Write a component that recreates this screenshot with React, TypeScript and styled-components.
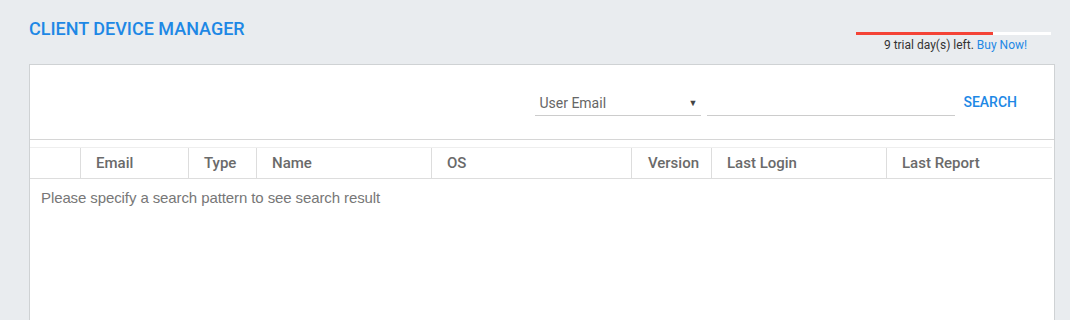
import React from 'react'
import styled, { createGlobalStyle } from 'styled-components'

const GlobalStyle = createGlobalStyle`
  body {
    margin: 0;
    background: #e9ecef;
    font-family: Roboto, "Liberation Sans", Arial, sans-serif;
  }
`

const Page = styled.div`
  padding: 0 15px 0 29px;
  height: 320px;
  overflow: hidden;
`

const Header = styled.div`
  display: flex;
  justify-content: space-between;
  align-items: flex-start;
  height: 64px;
`

const Title = styled.h1`
  margin: 18px 0 0;
  font-size: 18px;
  line-height: 22px;
  font-weight: 500;
  color: #1e88e5;
`

const Trial = styled.div`
  width: 195px;
  margin: 32px 4px 0 0;
  display: flex;
  flex-direction: column;
  align-items: center;
`

const Bar = styled.div`
  width: 100%;
  height: 3px;
  background: #fff;
`

const BarFill = styled.div`
  height: 100%;
  background: #f44336;
`

const TrialText = styled.div`
  margin: 3px 0 0 4px;
  font-size: 12px;
  line-height: 14px;
  color: #333;

  a {
    color: #1e88e5;
    text-decoration: none;
  }
`

const Panel = styled.div`
  background: #fff;
  border: 1px solid #cfd2d4;
  border-bottom: none;
  height: 260px;
`

const Toolbar = styled.div`
  display: flex;
  justify-content: flex-end;
  align-items: center;
  height: 74px;
  padding-right: 37px;
  border-bottom: 1px solid #d6d6d6;
`

const Select = styled.div`
  display: flex;
  justify-content: space-between;
  align-items: center;
  box-sizing: border-box;
  width: 166px;
  height: 28px;
  padding: 2px 4px 0;
  border-bottom: 1px solid #ccc;
  font-size: 14px;
  color: #666;

  span:last-child {
    font-size: 9px;
    color: #444;
  }
`

const Input = styled.div`
  box-sizing: border-box;
  width: 248px;
  height: 28px;
  margin-left: 6px;
  border-bottom: 1px solid #ccc;
`

const SearchButton = styled.button`
  border: none;
  background: none;
  margin-left: 8px;
  padding: 0;
  font-family: Roboto, sans-serif;
  font-size: 14px;
  font-weight: 500;
  color: #1e88e5;
  cursor: pointer;
`

const Table = styled.div`
  margin: 7px 2px 0 0;
`

const HeadRow = styled.div`
  display: grid;
  grid-template-columns: 50px 108px 68px 175px 200px 80px 175px 1fr;
  height: 30px;
  border-top: 1px solid #eee;
  border-bottom: 1px solid #ddd;
`

const HeadCell = styled.div<{ $right?: boolean }>`
  display: flex;
  align-items: center;
  justify-content: ${p => (p.$right ? 'flex-end' : 'flex-start')};
  padding: ${p => (p.$right ? '0 12px 0 0' : '0 0 0 15px')};
  font-size: 15px;
  font-weight: 500;
  color: #6a6a6a;
  & + & {
    border-left: 1px solid #ddd;
  }
`

const Empty = styled.div`
  padding: 10px 11px;
  font-family: "Liberation Sans", Arial, sans-serif;
  font-size: 15px;
  letter-spacing: -0.1px;
  color: #777;
`

const columns = [
  { label: '' },
  { label: 'Email' },
  { label: 'Type' },
  { label: 'Name' },
  { label: 'OS' },
  { label: 'Version', right: true },
  { label: 'Last Login' },
  { label: 'Last Report' }
]

const App = () => {
  const daysUsed = 0.7
  return (
    <Page>
      <GlobalStyle />
      <Header>
        <Title>CLIENT DEVICE MANAGER</Title>
        <Trial>
          <Bar>
            <BarFill style={{ width: `${daysUsed * 100}%` }} />
          </Bar>
          <TrialText>
            9 trial day(s) left. <a href='#'>Buy Now!</a>
          </TrialText>
        </Trial>
      </Header>
      <Panel>
        <Toolbar>
          <Select>
            <span>User Email</span>
            <span>▼</span>
          </Select>
          <Input />
          <SearchButton>SEARCH</SearchButton>
        </Toolbar>
        <Table>
          <HeadRow>
            {columns.map((c, i) => (
              <HeadCell key={i} $right={c.right}>{c.label}</HeadCell>
            ))}
          </HeadRow>
          <Empty>Please specify a search pattern to see search result</Empty>
        </Table>
      </Panel>
    </Page>
  )
}

export default App
